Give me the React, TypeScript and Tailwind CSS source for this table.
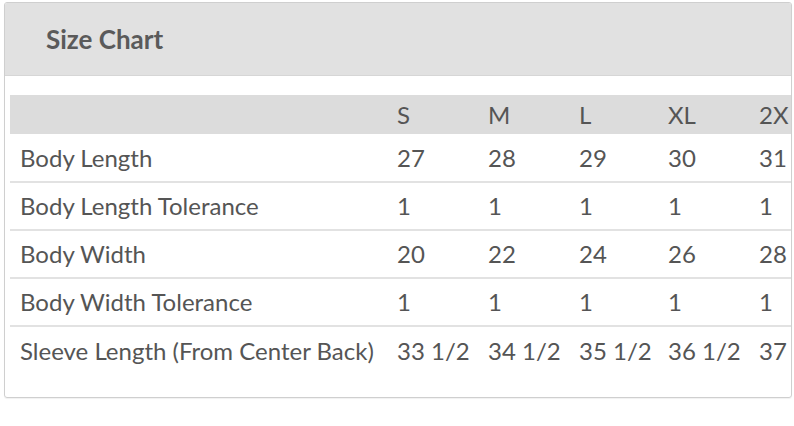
const sizes = ["S", "M", "L", "XL", "2X"];

const rows: { label: string; values: string[] }[] = [
  { label: "Body Length", values: ["27", "28", "29", "30", "31"] },
  { label: "Body Length Tolerance", values: ["1", "1", "1", "1", "1"] },
  { label: "Body Width", values: ["20", "22", "24", "26", "28"] },
  { label: "Body Width Tolerance", values: ["1", "1", "1", "1", "1"] },
  { label: "Sleeve Length (From Center Back)", values: ["33 1/2", "34 1/2", "35 1/2", "36 1/2", "37"] },
];

export default function App() {
  return (
    <div className="w-[794px] h-[426px] bg-white pl-[4px] pt-[2px] font-['Lato','Liberation_Sans',sans-serif] text-[#555]">
      <div className="w-[788px] h-[396px] border border-[#cfcfcf] rounded-[3px] overflow-hidden shadow-[0_1px_1px_rgba(0,0,0,0.06)]">
        {/* header */}
        <div className="h-[73px] bg-[#e1e1e1] border-b border-[#d6d6d6] flex items-center pl-[41px]">
          <h2 className="text-[26px] font-bold text-[#5a5a5a]">Size Chart</h2>
        </div>

        <div className="pt-[19px] pl-[5px]">
          <table className="border-collapse w-[833px] table-fixed">
            <colgroup>
              <col className="w-[379px]" />
              <col className="w-[91px]" />
              <col className="w-[91px]" />
              <col className="w-[89px]" />
              <col className="w-[91px]" />
              <col className="w-[92px]" />
            </colgroup>
            <thead>
              <tr className="bg-[#dcdcdc] h-[39px]">
                <th />
                {sizes.map((s) => (
                  <th key={s} className="text-left font-normal text-[24px] pl-[8px] text-[#555]">
                    {s}
                  </th>
                ))}
              </tr>
            </thead>
            <tbody>
              {rows.map((r, i) => (
                <tr key={r.label} className={i < rows.length - 1 ? "h-[48px] border-b-2 border-[#e2e2e2]" : "h-[48px]"}>
                  <td className="pl-[10px] text-[24px] whitespace-nowrap">{r.label}</td>
                  {r.values.map((v, j) => (
                    <td key={j} className="pl-[8px] text-[24px] whitespace-nowrap">
                      {v}
                    </td>
                  ))}
                </tr>
              ))}
            </tbody>
          </table>
        </div>
      </div>
    </div>
  );
}
